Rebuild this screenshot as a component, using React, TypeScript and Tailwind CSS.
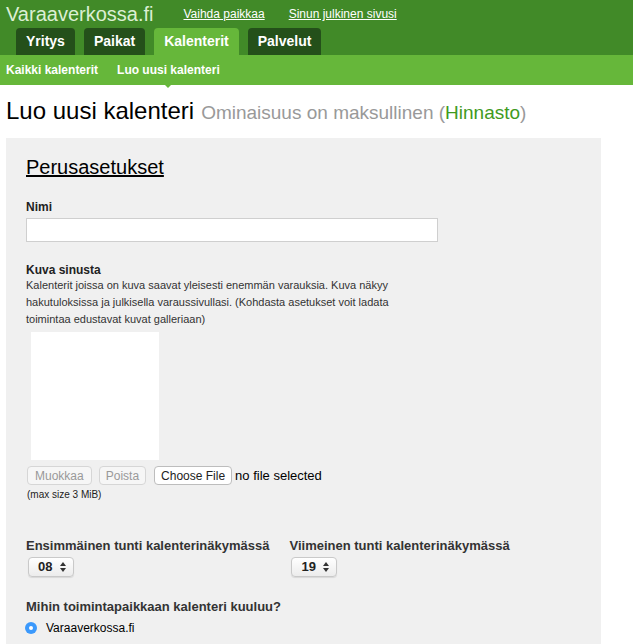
import React from "react";

const tabs = ["Yritys", "Paikat", "Kalenterit", "Palvelut"];

function HourSelect({ value }: { value: string }) {
    return (
        <div className="mt-[4px] ml-[2px] flex h-[20px] w-[46px] items-center justify-between rounded-[4px] border border-[#c9c9c9] bg-gradient-to-b from-white to-[#ececec] pl-[9px] pr-[7px] text-[13px] font-bold text-[#222] shadow-[0_1px_1px_rgba(0,0,0,0.1)]">
            <span>{value}</span>
            <svg width="6" height="10" viewBox="0 0 6 10">
                <path d="M3 0 L6 4 L0 4 Z M0 6 L6 6 L3 10 Z" fill="#333" />
            </svg>
        </div>
    );
}

export default function App() {
    return (
        <div className="min-h-[644px] bg-white font-['Liberation_Sans',Arial,sans-serif] text-[#222]">
            {/* header */}
            <div className="bg-[#418a28]">
                <div className="flex h-[28px] items-center px-[6px]">
                    <span className="text-[20px] leading-none text-[#dcefd4]">Varaaverkossa.fi</span>
                    <a className="ml-[30px] text-[12px] text-white underline">Vaihda paikkaa</a>
                    <a className="ml-[24px] text-[12px] text-white underline">Sinun julkinen sivusi</a>
                </div>
                <div className="flex h-[27px] items-end gap-[9px] pl-[16px]">
                    {tabs.map((t) => (
                        <div
                            key={t}
                            className={
                                t === "Kalenterit"
                                    ? "flex h-[27px] items-center rounded-t-[4px] bg-[#66b73a] px-[10px] text-[14px] font-bold text-white"
                                    : "flex h-[27px] items-center rounded-t-[4px] bg-[#24501a] px-[10px] text-[14px] font-bold text-white"
                            }
                        >
                            {t}
                        </div>
                    ))}
                </div>
            </div>
            <div className="flex h-[30px] items-center gap-[19px] bg-[#66b73a] px-[6px] text-[12px] font-bold text-white">
                <span>Kaikki kalenterit</span>
                <span className="relative">
                    Luo uusi kalenteri
                    <span className="absolute left-1/2 top-[21px] h-0 w-0 -translate-x-1/2 border-x-[6px] border-t-[6px] border-x-transparent border-t-[#66b73a]" />
                </span>
            </div>

            {/* title */}
            <div className="mt-[14px] px-[6px] leading-none">
                <span className="text-[24px] text-black">Luo uusi kalenteri</span>
                <span className="ml-[7px] text-[19px] text-[#999]">
                    Ominaisuus on maksullinen (<span className="text-[#3f9a1e]">Hinnasto</span>)
                </span>
            </div>

            {/* panel */}
            <div className="ml-[6px] mt-[15px] w-[595px] bg-[#f0f0f0] px-[20px] pb-[10px] pt-[19px]">
                <h2 className="text-[20px] leading-none text-black underline">Perusasetukset</h2>

                <div className="mt-[23px] text-[12px] font-bold leading-[14px]">Nimi</div>
                <input className="mt-[4px] h-[24px] w-[412px] border border-[#cfcfcf] bg-white" />

                <div className="mt-[21px] text-[12px] font-bold leading-[14px]">Kuva sinusta</div>
                <p className="w-[400px] text-[11px] leading-[17px] text-[#333]">
                    Kalenterit joissa on kuva saavat yleisesti enemmän varauksia. Kuva näkyy hakutuloksissa ja julkisella varaussivullasi. (Kohdasta asetukset voit ladata toimintaa edustavat kuvat galleriaan)
                </p>
                <div className="ml-[5px] mt-[4px] h-[128px] w-[128px] bg-white" />

                <div className="mt-[6px] flex items-center text-[12px]">
                    <button className="ml-[1px] h-[19px] rounded-[4px] border border-[#d6d6d6] bg-[#f6f6f6] px-[7px] text-[#999]">Muokkaa</button>
                    <button className="ml-[7px] h-[19px] rounded-[4px] border border-[#d6d6d6] bg-[#f6f6f6] px-[6px] text-[#999]">Poista</button>
                    <button className="ml-[8px] h-[19px] rounded-[4px] border border-[#bdbdbd] bg-white px-[6px] text-[#222]">Choose File</button>
                    <span className="ml-[3px] text-[13px] text-black">no file selected</span>
                </div>
                <div className="ml-[1px] mt-[3px] text-[10px] leading-[12px] text-[#222]">(max size 3 MiB)</div>

                <div className="mt-[37px] flex gap-[20px]">
                    <div>
                        <div className="text-[13px] font-bold leading-[15px] text-[#333]">Ensimmäinen tunti kalenterinäkymässä</div>
                        <HourSelect value="08" />
                    </div>
                    <div>
                        <div className="text-[13px] font-bold leading-[15px] text-[#333]">Viimeinen tunti kalenterinäkymässä</div>
                        <HourSelect value="19" />
                    </div>
                </div>

                <div className="mt-[22px] text-[13px] font-bold leading-[15px] text-[#333]">Mihin toimintapaikkaan kalenteri kuuluu?</div>
                <div className="mt-[5px] flex items-center text-[12px] text-black">
                    <span className="ml-[-1px] flex h-[12px] w-[12px] items-center justify-center rounded-full bg-[#3b99fc]">
                        <span className="h-[4px] w-[4px] rounded-full bg-white" />
                    </span>
                    <span className="ml-[9px]">Varaaverkossa.fi</span>
                </div>
            </div>
        </div>
    );
}
